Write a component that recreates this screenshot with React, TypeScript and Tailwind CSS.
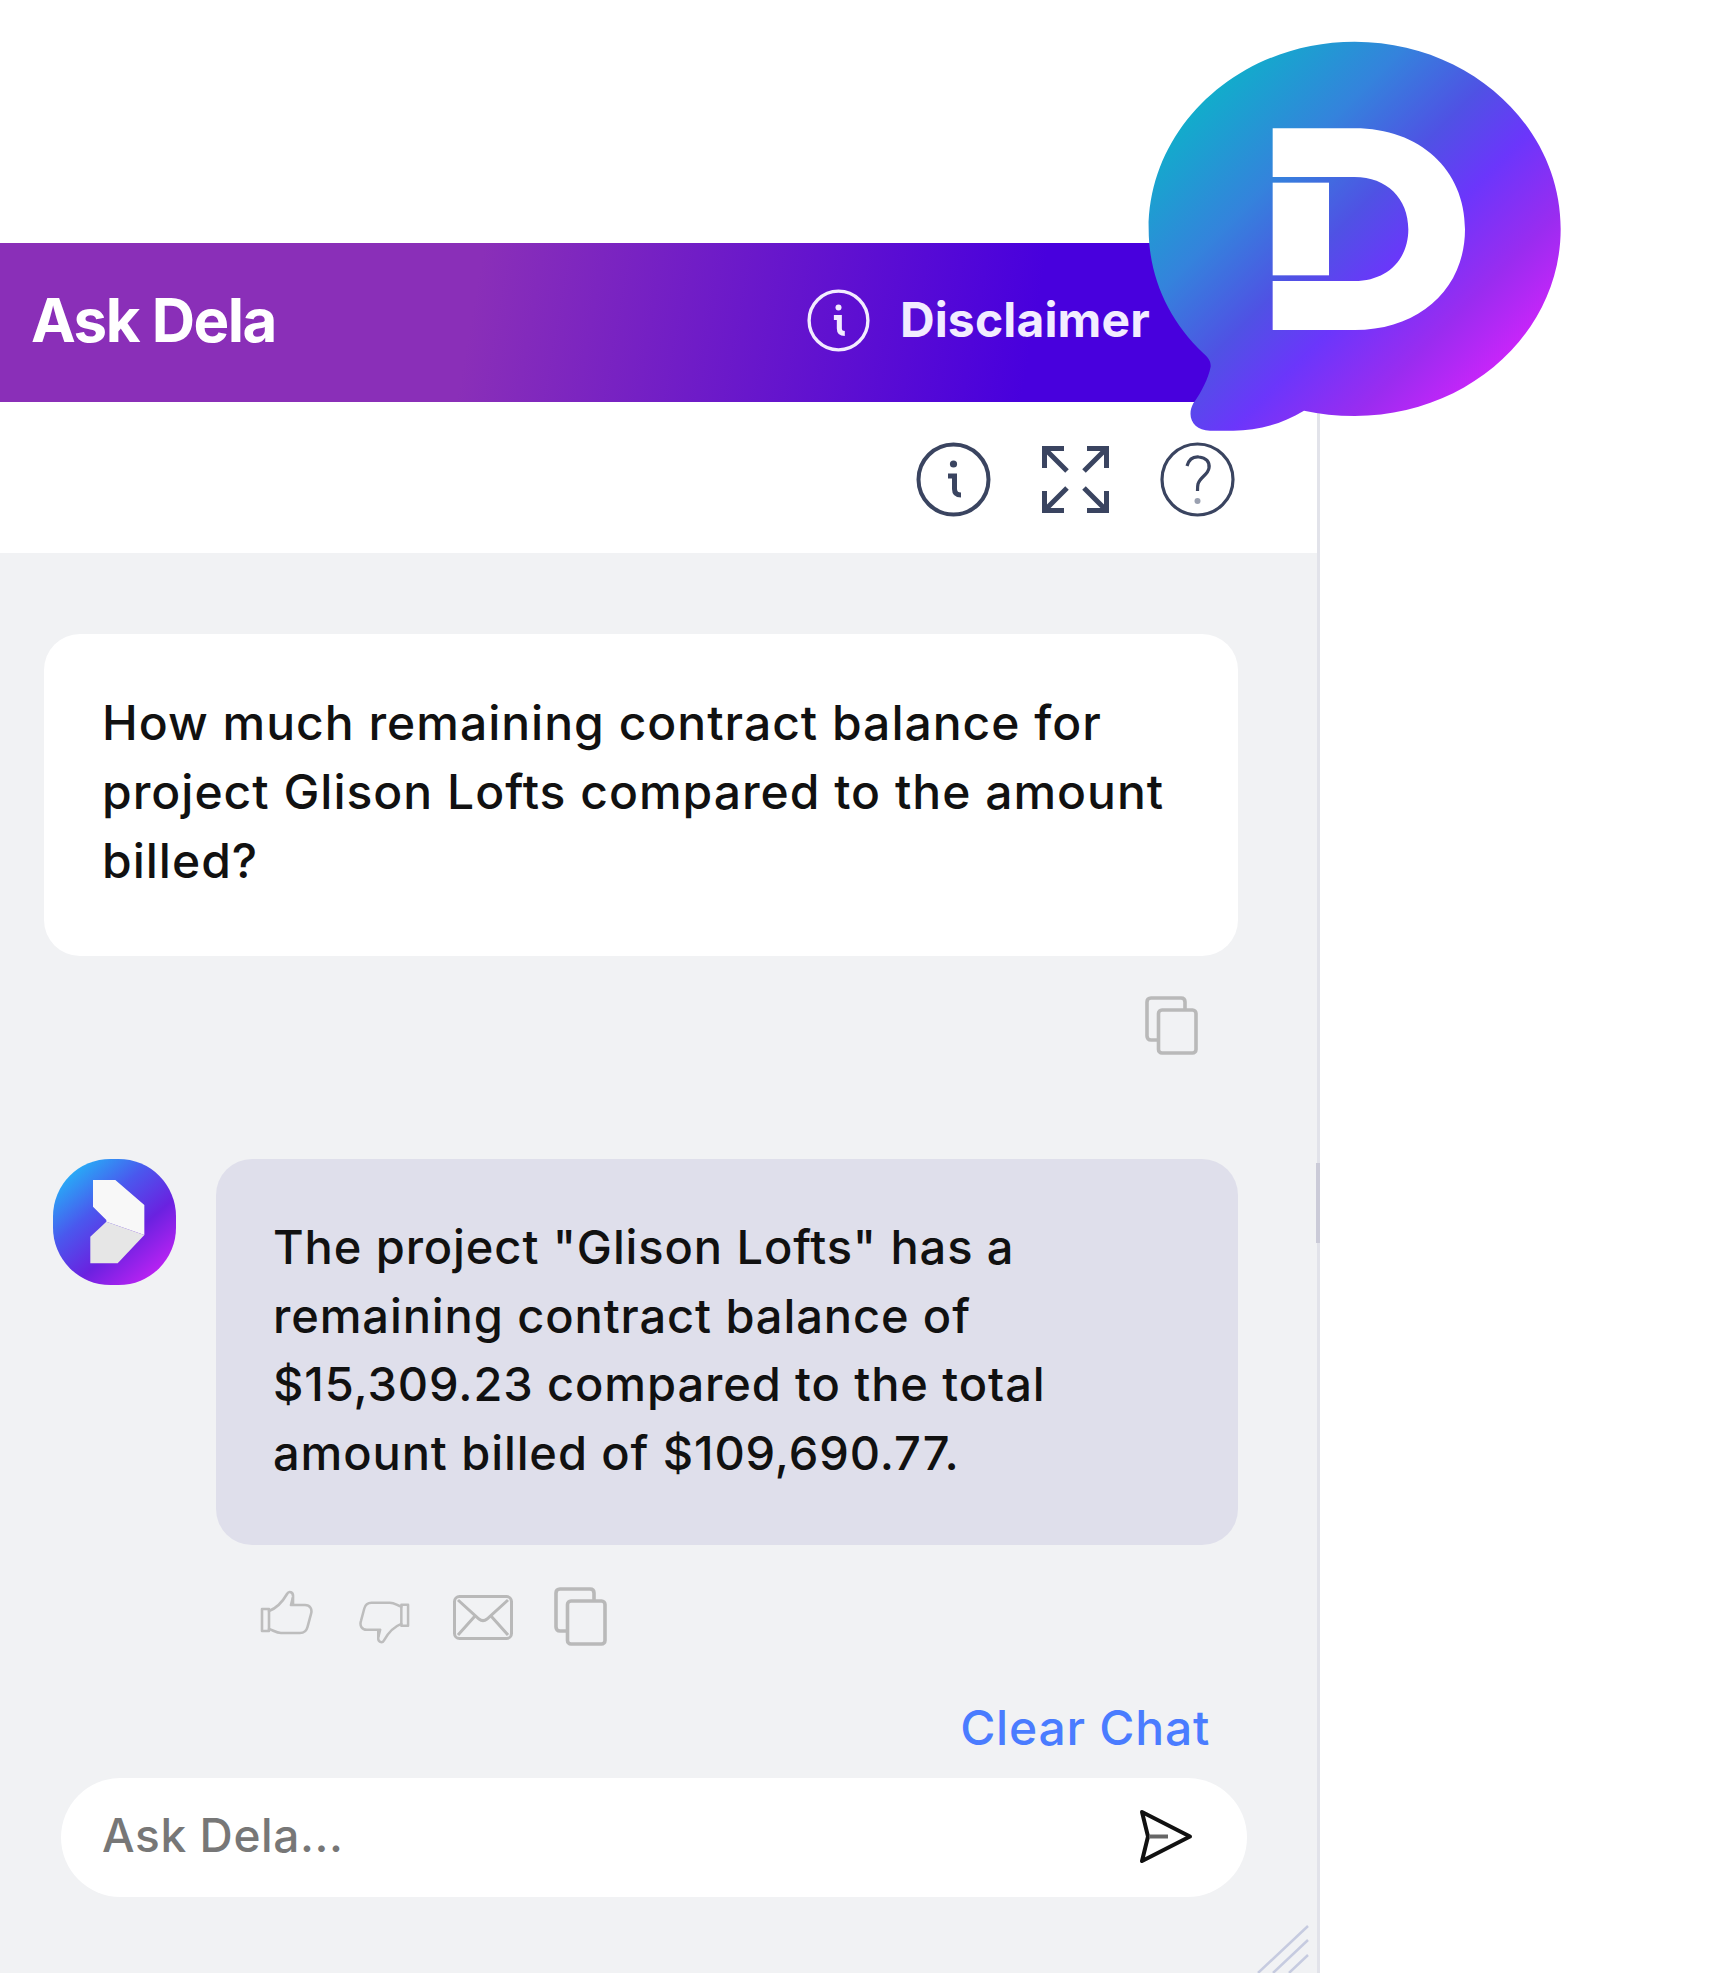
import React from "react";

function Logo() {
  return (
    <svg className="absolute left-[1100px] top-[20px] w-[500px] h-[440px]" viewBox="0 0 1500 1320">
      <defs>
        <linearGradient id="lg" gradientUnits="userSpaceOnUse" x1="300" y1="170" x2="1230" y2="1100">
          <stop offset="0" stopColor="#0bb4c8" />
          <stop offset="0.28" stopColor="#3483dc" />
          <stop offset="0.47" stopColor="#4f52e4" />
          <stop offset="0.62" stopColor="#6b36fb" />
          <stop offset="0.8" stopColor="#9a2cf0" />
          <stop offset="1" stopColor="#d922fd" />
        </linearGradient>
      </defs>
      <path
        fill="url(#lg)"
        d="M764 65C1105 65 1382 316 1382 627C1382 937 1105 1188 764 1188C710 1188 660 1182 612 1172C540 1215 470 1232 400 1232L330 1232C280 1232 258 1190 280 1150C305 1115 325 1075 332 1040C333 1025 325 1012 310 1000C205 900 146 770 146 627C146 316 423 65 764 65Z"
      />
      <path
        fill="#fff"
        d="M518 325L764 325C960 325 1095 450 1095 628C1095 805 960 930 764 930L518 930L518 783L764 783C860 783 925 720 925 628C925 535 860 471 764 471L518 471Z"
      />
      <rect x="518" y="488" width="169" height="278" fill="#fff" />
    </svg>
  );
}

function Avatar() {
  return (
    <svg className="w-[123px] h-[126px] shrink-0" viewBox="158 597 369 378">
      <defs>
        <linearGradient id="av" gradientUnits="userSpaceOnUse" x1="200" y1="620" x2="480" y2="950">
          <stop offset="0" stopColor="#22b8f8" />
          <stop offset="0.35" stopColor="#4a58ee" />
          <stop offset="0.65" stopColor="#6a22e0" />
          <stop offset="1" stopColor="#c322f5" />
        </linearGradient>
      </defs>
      <rect x="158" y="597" width="369" height="378" rx="172" ry="172" fill="url(#av)" />
      <polygon points="278,660 345,660 432,735 432,825 318,785 318,780 278,740" fill="#f8f8f8" />
      <polygon points="270,830 318,785 432,825 352,910 270,910" fill="#e6e6e6" />
    </svg>
  );
}

function InfoIcon({ color, className, weight }: { color: string; className: string; weight: number }) {
  return (
    <svg className={className} viewBox="0 0 75 75" fill="none" stroke={color}>
      <circle cx="37.5" cy="37.5" r="35" strokeWidth="4" />
      <circle cx="37.5" cy="22" r="3.6" fill={color} stroke="none" />
      <path d="M32 34H38.500V47C38.500 51 40.500 53 45 53" strokeWidth={weight} />
    </svg>
  );
}

function ExpandIcon() {
  return (
    <svg className="w-[67px] h-[67px]" viewBox="0 0 67 67" fill="none" stroke="#3a4460" strokeWidth="5">
      <path d="M2.5 22V2.5H22M3 3L25 25" />
      <path d="M45 2.5H64.5V22M64 3L42 25" />
      <path d="M2.5 45V64.5H22M3 64L25 42" />
      <path d="M45 64.5H64.5V45M64 64L42 42" />
    </svg>
  );
}

function QuestionIcon() {
  return (
    <svg className="w-[75px] h-[75px]" viewBox="0 0 75 75" fill="none" stroke="#3a4460">
      <circle cx="37.5" cy="37.5" r="35.5" strokeWidth="3.2" />
      <path d="M27 24C29 17 34 14.500 39 15C46 15.500 50 20 49 26C48 33 40 35 38 42C37.500 44 37.500 46 37.500 49" strokeWidth="3.2" />
      <circle cx="37.5" cy="59" r="3" fill="#9aa0b0" stroke="none" />
    </svg>
  );
}

function CopyIcon() {
  return (
    <svg className="w-[53px] h-[59px]" viewBox="0 0 53 59" fill="none" stroke="#b9b9b9" strokeWidth="3.600">
      <path d="M14 44H6C3.500 44 2 42.500 2 40V6C2 3.500 3.500 2 6 2H36C38.500 2 40 3.500 40 6V13" />
      <rect x="13.500" y="14" width="37.500" height="43" rx="3.500" />
    </svg>
  );
}

function MailIcon() {
  return (
    <svg className="w-[60px] h-[45px] mt-[8px]" viewBox="0 0 60 45" fill="none" stroke="#b9b9b9" strokeWidth="3">
      <rect x="1.500" y="1.500" width="57" height="42" rx="5" />
      <path d="M5 5L26 24C28.500 26 31.500 26 34 24L55 5" />
      <path d="M5 40L22 21M55 40L38 21" />
    </svg>
  );
}

function ThumbIcon({ className }: { className: string }) {
  return (
    <svg className={className} viewBox="0 0 53 45" fill="none" stroke="#bdbdbd" strokeWidth="2.600" strokeLinejoin="round" strokeLinecap="round">
      <path d="M2 19H9V41H2Z" />
      <path d="M9 21C17 18 23 11 27 4C29 0.500 33.500 2 33 7L31 15H45C50 15 52.500 19 51 24L47.500 37C46.500 41 44 43 40 43H21C16 43 13 40 9 39" />
      <path d="M33 8V14" />
    </svg>
  );
}

function SendIcon() {
  return (
    <svg className="w-[54px] h-[55px] shrink-0 mb-[3px]" viewBox="0 0 54 55" fill="none" strokeLinejoin="round">
      <path d="M3 3L51 27.500L3 52L9 27.500Z" stroke="#111" strokeWidth="4" />
      <path d="M10 27.500H29" stroke="#666" strokeWidth="4" />
    </svg>
  );
}

export default function App() {
  return (
    <div className="relative h-[1980px] w-full bg-white pt-[243px] font-['Inter',sans-serif] overflow-hidden">
      <div className="relative flex h-[1730px] w-[1320px] flex-col border-r-[3px] border-[#e2e3ea] bg-[#f1f2f4]">
        <header className="flex h-[159px] items-center justify-between pb-[5px] pl-[31px] pr-[167px] bg-[linear-gradient(100deg,#8a2fb8_0%,#8a2fb8_36%,#4800dd_78%,#4800dd_100%)]">
          <h1 className="text-[60px] font-bold text-white tracking-[-1.5px]">Ask Dela</h1>
          <div className="flex items-center gap-[30px]">
            <InfoIcon color="#f2ecff" weight={6} className="w-[63px] h-[63px]" />
            <span className="text-[48px] font-bold text-[#f2ecff] tracking-[0.15px]">Disclaimer</span>
          </div>
        </header>

        <div className="flex h-[151px] items-center justify-end gap-[51px] bg-white pr-[82px] pt-[4px]">
          <InfoIcon color="#3a4460" weight={5} className="w-[75px] h-[75px]" />
          <ExpandIcon />
          <QuestionIcon />
        </div>

        <div className="flex flex-col pl-[44px] pr-[79px] pt-[81px]">
          <div className="rounded-[36px] bg-white pl-[58px] pt-[54px] pb-[61px] text-[48px] leading-[69px] font-medium text-[#111] tracking-[1px]">
            How much remaining contract balance for
            <br />
            project Glison Lofts compared to the amount
            <br />
            billed?
          </div>
          <div className="mt-[40px] flex justify-end pr-[40px]">
            <CopyIcon />
          </div>
          <div className="mt-[104px] flex gap-[40px] pl-[9px]">
            <Avatar />
            <div className="flex-1 rounded-[36px] bg-[#dfdfeb] pl-[57px] pt-[54px] pb-[58px] text-[47px] leading-[68.5px] font-medium text-[#111] tracking-[0.9px]">
              The project "Glison Lofts" has a
              <br />
              remaining contract balance of
              <br />
              $15,309.23 compared to the total
              <br />
              amount billed of $109,690.77.
            </div>
          </div>
          <div className="mt-[42px] flex items-start pl-[216px]">
            <ThumbIcon className="w-[53px] h-[45px] mt-[3px]" />
            <ThumbIcon className="ml-[46px] w-[51px] h-[45px] mt-[13px] rotate-180" />
            <div className="ml-[43px]">
              <MailIcon />
            </div>
            <div className="ml-[41px]">
              <CopyIcon />
            </div>
          </div>
        </div>

        <div className="mt-[52px] pr-[107px] text-right text-[48px] leading-[60px] font-medium text-[#4a7cff] tracking-[0.76px]">Clear Chat</div>

        <div className="pl-[61px] pr-[70px] mt-[20px]">
          <div className="flex h-[119px] items-center rounded-[60px] bg-white pl-[41px] pr-[54px]">
            <input
              className="min-w-0 flex-1 bg-transparent pb-[4px] text-[46px] font-medium tracking-[0.6px] text-[#777] outline-none placeholder:text-[#777]"
              placeholder="Ask Dela..."
              readOnly
            />
            <SendIcon />
          </div>
        </div>

        <svg className="absolute bottom-0 right-0 w-[60px] h-[50px]" viewBox="0 0 60 50" fill="none" stroke="#c6cbe0" strokeWidth="2.500">
          <path d="M1 50L51 3M16 50L51 17M32 50L51 32" />
        </svg>
        <div className="absolute right-[-3px] top-[920px] h-[80px] w-[4px] bg-[#cbcbd8]" />
      </div>
      <Logo />
    </div>
  );
}
